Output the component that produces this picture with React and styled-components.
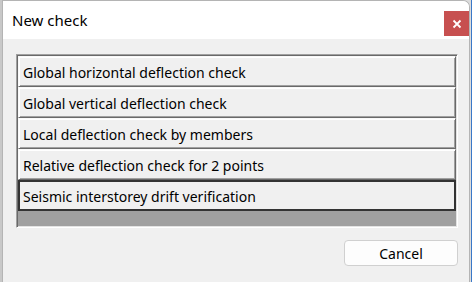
import React from 'react'
import { styled, createGlobalStyle } from 'styled-components'

const GlobalStyle = createGlobalStyle`
  html, body {
    margin: 0;
    padding: 0;
    background: #dcdcdc;
    font-family: 'Noto Sans', 'Open Sans', sans-serif;
  }
`

const checks = [
  'Global horizontal deflection check',
  'Global vertical deflection check',
  'Local deflection check by members',
  'Relative deflection check for 2 points',
  'Seismic interstorey drift verification',
]

const App = () => {
  return (
    <Page>
      <GlobalStyle />
      <Window>
        <TitleBar>
          <Title>New check</Title>
          <CloseButton aria-label="Close">
            <svg width="10" height="10" viewBox="0 0 10 10">
              <path d="M1.5 1.5 L8.5 8.5 M8.5 1.5 L1.5 8.5" stroke="#fff" strokeWidth="1.8" />
            </svg>
          </CloseButton>
        </TitleBar>
        <Body>
          <List>
            {checks.map((c, i) => (
              <Item key={c} $focused={i === checks.length - 1}>
                {c}
              </Item>
            ))}
          </List>
          <Footer>
            <Button>Cancel</Button>
          </Footer>
        </Body>
      </Window>
    </Page>
  )
}

const Page = styled('div')`
  width: 472px;
  height: 282px;
  padding-left: 2px;
  box-sizing: border-box;
  background: linear-gradient(to right, #c8c8c8 0, #c8c8c8 2px, transparent 2px);
  border-right: 1px solid #3a78c8;
  overflow: hidden;
`

const Window = styled('div')`
  width: 468px;
  height: 282px;
  box-sizing: border-box;
  border: 1px solid #b4b4b4;
  border-bottom: none;
  border-top-right-radius: 7px;
  overflow: hidden;
  display: flex;
  flex-direction: column;
  background: #f0f0f0;
`

const TitleBar = styled('div')`
  height: 38px;
  background: #fff;
  display: flex;
  justify-content: space-between;
  align-items: flex-start;
  padding-left: 9px;
`

const Title = styled('div')`
  font-size: 15px;
  color: #000;
  margin-top: 9px;
`

const CloseButton = styled('div')`
  width: 25px;
  height: 25px;
  margin-top: 10px;
  background: #c75050;
  display: flex;
  align-items: center;
  justify-content: center;
`

const Body = styled('div')`
  flex: 1;
  padding: 15px 11px 0 13px;
  display: flex;
  flex-direction: column;
`

const List = styled('div')`
  height: 174px;
  box-sizing: border-box;
  background: #a0a0a0;
  border: 1px solid;
  border-color: #a0a0a0 #fff #fff #a0a0a0;
  box-shadow: inset 1px 1px 0 #696969, inset -1px -1px 0 #e3e3e3;
  padding: 1px;
  display: flex;
  flex-direction: column;
`

const Item = styled('div')`
  height: 31px;
  flex: none;
  box-sizing: border-box;
  background: #f0f0f0;
  font-size: 14px;
  color: #000;
  display: flex;
  align-items: center;
  padding: 2px 0 0 4px;
  border: 1px solid;
  border-color: ${p => (p.$focused ? '#333' : '#f8f8f8 #696969 #696969 #f8f8f8')};
  box-shadow: ${p =>
    p.$focused
      ? 'inset 1px 1px 0 #333, inset -1px -1px 0 #333'
      : 'inset 1px 1px 0 #fff, inset -1px -1px 0 #a0a0a0'};
  white-space: nowrap;
`

const Footer = styled('div')`
  display: flex;
  justify-content: flex-end;
  padding-top: 12px;
`

const Button = styled('div')`
  width: 114px;
  height: 26px;
  box-sizing: border-box;
  background: #fdfdfd;
  border: 1px solid #d0d0d0;
  border-radius: 4px;
  font-size: 14px;
  color: #000;
  display: flex;
  align-items: center;
  justify-content: center;
`

export default App
